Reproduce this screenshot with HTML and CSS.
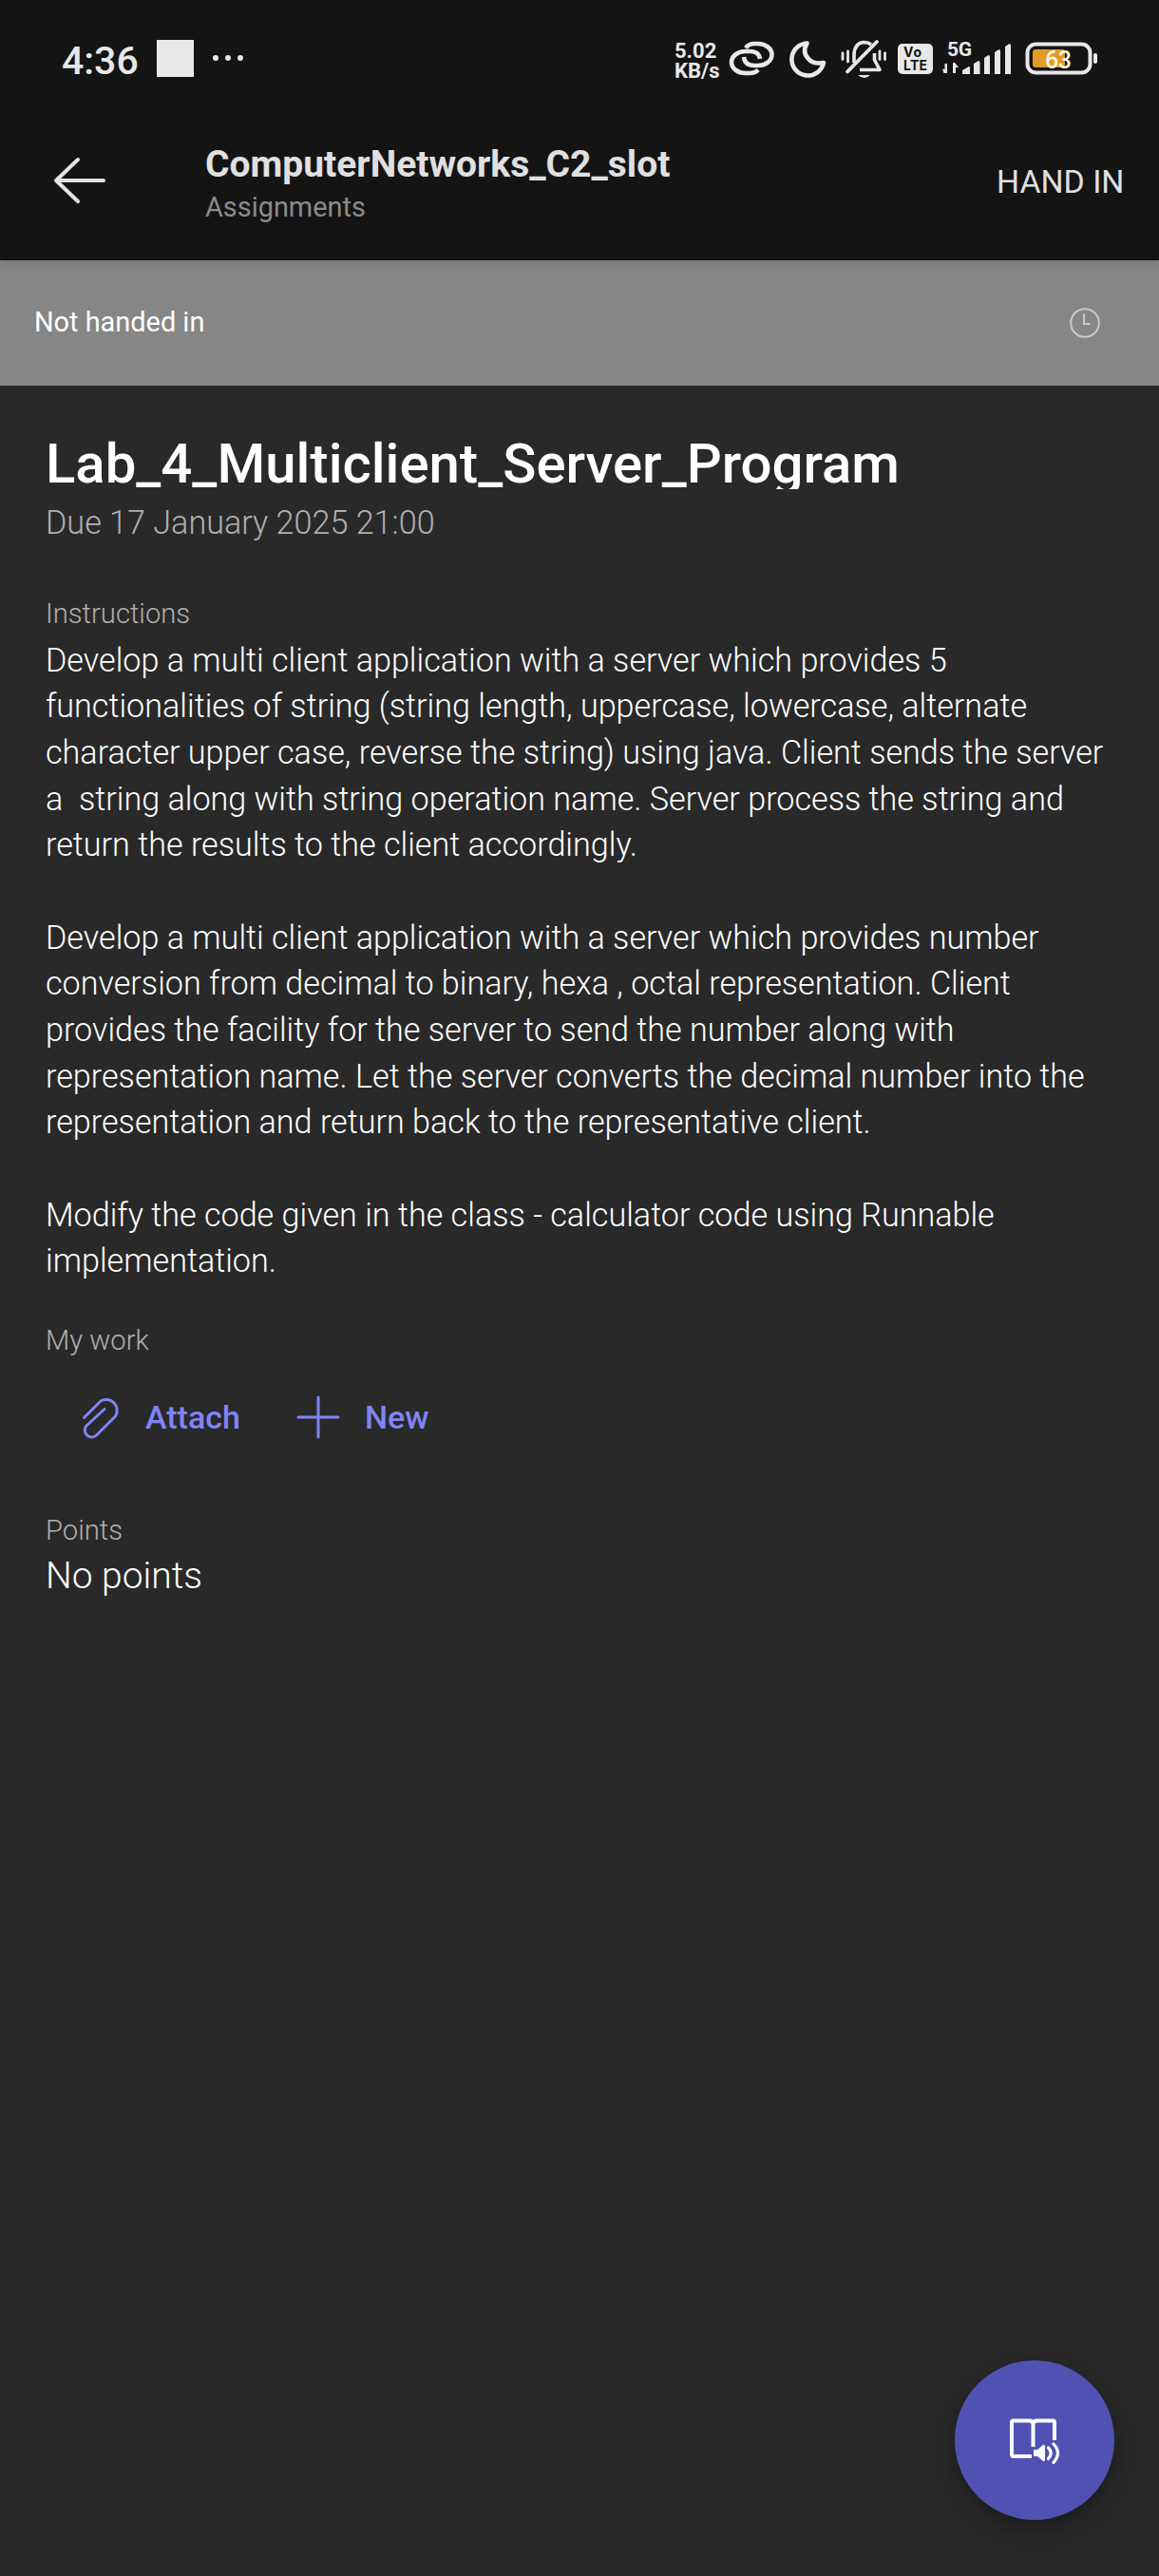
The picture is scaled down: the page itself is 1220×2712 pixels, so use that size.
FILE: index.html
```html
<!DOCTYPE html>
<html lang="en">
<head>
<meta charset="utf-8">
<title>Assignments</title>
<link rel="stylesheet" href="styles.css">
</head>
<body>
<header class="top">
  <div class="status">
    <span class="time">4:36</span>
    <span class="square"></span>
    <span class="dots"><i></i><i></i><i></i></span>
    <span class="speed"><span>5.02</span><span>KB/s</span></span>
    <svg class="sys" width="456" height="50" viewBox="760 36 456 50" fill="none" stroke="#e8e8e8" stroke-width="4.6">
      <path d="M785 50.500Q788 46 794 46H798A14.500 11.500 0 0 1 798 69H794Q784 69 783 60"/>
      <path d="M798 73.500Q795 77 789 77H784.500A14.500 11.500 0 0 1 784.500 54H789Q799 54 800 62"/>
      <path d="M849.500 45.500A17 17 0 1 0 867 66Q856 68 851 62Q844 55 849.500 45.500Z" stroke-linejoin="round"/>
      <path d="M899 66V57Q900 45 909.500 44.500Q914 44.500 917 47M920.500 56V63L926 73.500H905" stroke-width="3.600" stroke-linejoin="round"/>
      <path d="M892 75.500L923 44" stroke-linecap="round" stroke-width="3.800"/>
      <path d="M887 56V62.500M892.500 54V65M926 54V62.500M931.500 56V62.500" stroke-width="2.800" stroke-linecap="round"/>
      <path d="M903 79H916Q910 85 903 79Z" fill="#e8e8e8" stroke="none"/>
      <rect x="945" y="46" width="37" height="32" rx="5" fill="#e8e8e8" stroke="none"/>
      <g fill="#e8e8e8" stroke="none">
        <path d="M997 67V77H993.500L992 72.500L994.500 73V67ZM1003 77V66H1005L1009 71H1006V77Z"/>
        <path d="M1013 78V74L1020 70Q1021 70 1021 71V78ZM1025 78V67L1030 64Q1031.500 64 1031.500 66V78ZM1036 78V61L1040.500 58Q1042 58 1042 60V78ZM1047 78V55L1051.500 52Q1053 52 1053 54V78ZM1058 78V49L1062.500 46Q1064 46 1064 48V78Z"/>
        <rect x="1151" y="56" width="4" height="11" rx="2"/>
      </g>
      <rect x="1081.500" y="46.500" width="66" height="30" rx="9" stroke-width="4"/>
      <rect x="1087" y="52" width="34" height="19" rx="3" fill="#e39b23" stroke="none"/>
      <g fill="#141414" stroke="none" font-family="Inter, sans-serif" font-weight="700">
        <text x="951" y="60" font-size="14" textLength="19">Vo</text>
        <text x="951" y="74" font-size="14" textLength="25">LTE</text>
      </g>
      <g stroke="none" font-family="Roboto, sans-serif">
        <text x="997" y="59" font-size="21" font-weight="700" fill="#e8e8e8" textLength="26">5G</text>
        <text x="1100" y="72" font-size="25" font-weight="500" fill="#fff6e2" textLength="28">63</text>
      </g>
    </svg>
  </div>
  <div class="bar">
    <svg class="back" width="58" height="56" viewBox="0 0 58 56" fill="none" stroke="#e3e3e3" stroke-width="4" stroke-linecap="round" stroke-linejoin="round"><path d="M28 6L5 28L28 50M5 28H55"/></svg>
    <div class="names">
      <div class="class-name">ComputerNetworks_C2_slot</div>
      <div class="sub">Assignments</div>
    </div>
    <span class="hand">HAND IN</span>
  </div>
</header>
<section class="banner">
  <span>Not handed in</span>
  <svg width="34" height="34" viewBox="0 0 34 34" fill="none" stroke="#c9c9c9" stroke-width="2"><circle cx="17" cy="17" r="14.800"/><path d="M16 7.500V18H22.500"/></svg>
</section>
<main>
  <h1>Lab_4_Multiclient_Server_Program</h1>
  <div class="due">Due 17 January 2025 21:00</div>
  <h2 class="l-ins">Instructions</h2>
  <div class="text">Develop a multi client application with a server which provides 5
functionalities of string (string length, uppercase, lowercase, alternate
character upper case, reverse the string) using java. Client sends the server
a  string along with string operation name. Server process the string and
return the results to the client accordingly.

Develop a multi client application with a server which provides number
conversion from decimal to binary, hexa , octal representation. Client
provides the facility for the server to send the number along with
representation name. Let the server converts the decimal number into the
representation and return back to the representative client.

Modify the code given in the class - calculator code using Runnable
implementation.</div>
  <h2 class="l-work">My work</h2>
  <div class="actions">
    <svg width="46" height="48" viewBox="84 1470 46 48" fill="none" stroke="#7f85f5" stroke-width="3" stroke-linecap="round" stroke-linejoin="round"><path d="M88.500 1494.500L106 1477A11.500 11.500 0 0 1 121.500 1493L101.500 1513A7.200 7.200 0 0 1 91.500 1502.500L110 1485.500"/></svg>
    <span class="label">Attach</span>
    <svg class="plus" width="46" height="46" viewBox="0 0 46 46" stroke="#7f85f5" stroke-width="3" stroke-linecap="round"><path d="M23 2V44M2 23H44"/></svg>
    <span class="label">New</span>
  </div>
  <h2 class="l-points">Points</h2>
  <div class="points">No points</div>
</main>
<button class="fab" aria-label="Read aloud">
  <svg width="56" height="52" viewBox="1062 2543 56 52" fill="none" stroke="#fff" stroke-width="4"><path d="M1087 2586H1068Q1066 2586 1066 2584V2550.500Q1066 2548.500 1068 2548.500H1084Q1088.500 2548.500 1088.500 2552V2576M1088.500 2552Q1088.500 2548.500 1093 2548.500H1109Q1111 2548.500 1111 2550.500V2569"/><path d="M1089 2579H1093L1099 2574Q1101 2573 1101 2576V2590Q1101 2592 1099 2591L1093 2586H1089Z" fill="#fff" stroke="none"/><path d="M1104.500 2577Q1110 2582.500 1104.500 2588.500M1110 2573Q1119 2582.500 1110 2592.500" stroke-width="3.200" stroke-linecap="round"/></svg>
</button>
</body>
</html>
```
FILE: styles.css
```css
* { box-sizing: border-box; }
body { margin: 0; width: 1220px; height: 2712px; background: #292929; color: #fff; font-family: Roboto, sans-serif; font-weight: 300; white-space: nowrap; position: relative; overflow: hidden; }
svg { display: block; flex: none; }
.top { height: 274px; background: #141414; color: #e8e8e8; position: relative; box-shadow: 0 1px 12px rgba(0,0,0,.2); }
.status { display: flex; height: 124px; }
.time { margin: 39px 0 0 65px; width: 100px; flex: none; font-size: 41px; line-height: 50px; font-weight: 500; }
.square { width: 39px; height: 39px; margin-top: 42px; background: #e8e8e8; }
.dots { display: flex; gap: 7px; margin: 58px 0 0 20px; width: 486px; }
.dots i { width: 6px; height: 6px; border-radius: 50%; background: #e8e8e8; }
.speed { display: flex; flex-direction: column; width: 50px; margin-top: 43px; font-size: 22px; line-height: 21px; font-weight: 700; }
.sys { margin-top: 36px; }
.bar { display: flex; align-items: flex-start; height: 150px; padding-left: 54px; }
.back { margin-top: 38px; }
.names { margin: 25px 0 0 104px; width: 833px; }
.class-name { font-size: 39px; line-height: 48px; font-weight: 700; color: #e0e0e0; }
.sub { font-size: 28.900px; line-height: 42px; font-weight: 400; color: #8b8b8b; }
.hand { margin-top: 48px; font-size: 33.800px; line-height: 40px; font-weight: 400; color: #e0e0e0; }
.banner { height: 132px; background: #868686; display: flex; align-items: center; justify-content: space-between; padding: 0 61px 0 36px; font-size: 28.900px; font-weight: 400; }
.banner span { margin-bottom: 2px; }
main { padding: 52px 48px 0; }
h1, h2 { margin: 0; }
h1 { height: 57px; overflow: hidden; font-size: 58.100px; line-height: 61px; font-weight: 500; }
.due { margin-top: 11px; font-size: 34.150px; line-height: 48px; color: #b0b0b0; }
h2 { font-size: 29.200px; line-height: 36px; font-weight: 300; color: #b0b0b0; }
.l-ins { margin-top: 54px; }
.text { margin-top: 6.800px; height: 681.200px; white-space: pre; font-size: 34.150px; line-height: 48.650px; }
.l-work { margin-top: 41px; }
.actions { display: flex; align-items: center; height: 62px; margin: 32px 0 0 36px; font-size: 34px; font-weight: 500; color: #7f85f5; }
.actions .label { margin-left: 23px; }
.actions .plus { margin-left: 59px; }
.actions .plus + .label { margin-left: 26px; }
.l-points { margin-top: 70px; }
.points { margin-top: 7px; font-size: 39px; line-height: 46px; }
.fab { position: absolute; left: 1005px; top: 2485px; width: 168px; height: 168px; padding: 0; border: 0; border-radius: 50%; background: #4f52b2; box-shadow: 0 10px 28px rgba(0,0,0,.35); display: flex; justify-content: center; align-items: center; }
```
